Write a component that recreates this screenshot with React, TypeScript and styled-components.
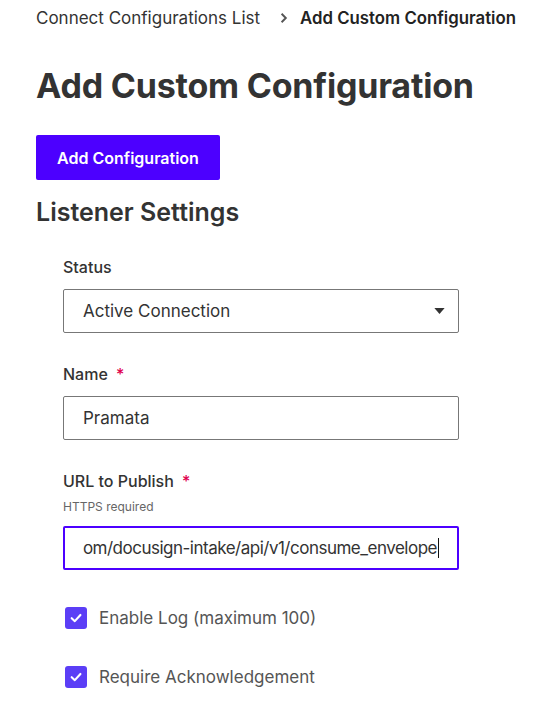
import React from "react";
import styled, { createGlobalStyle } from "styled-components";

const GlobalStyle = createGlobalStyle`
  body {
    margin: 0;
    background: #ffffff;
    font-family: "Inter", "Open Sans", sans-serif;
    color: #333333;
  }
`;

const Check = () => (
  <svg viewBox="0 0 12 12" width="14" height="14">
    <path d="M2.3 6.2 L5 8.7 L9.8 3.4" />
  </svg>
);

const App: React.FC = () => {
  return (
    <>
      <GlobalStyle />
      <Page>
        <Breadcrumb>
          <Crumb>Connect Configurations List</Crumb>
          <Chevron viewBox="0 0 10 10">
            <path d="M3 1.5 L6.5 5 L3 8.5" />
          </Chevron>
          <CurrentCrumb>Add Custom Configuration</CurrentCrumb>
        </Breadcrumb>
        <Title>Add Custom Configuration</Title>
        <PrimaryButton>Add Configuration</PrimaryButton>
        <SectionTitle>Listener Settings</SectionTitle>
        <Form>
          <Field>
            <Label>Status</Label>
            <SelectBox>
              <span>Active Connection</span>
              <Caret viewBox="0 0 12 7">
                <path d="M0 0 H12 L6 7 Z" />
              </Caret>
            </SelectBox>
          </Field>
          <Field>
            <Label>
              Name <Required>*</Required>
            </Label>
            <InputBox>Pramata</InputBox>
          </Field>
          <Field>
            <Label>
              URL to Publish <Required>*</Required>
            </Label>
            <Hint>HTTPS required</Hint>
            <InputBox focused>
              <Scroll>
                <UrlText>https://integrations.pramata.com/docusign-intake/api/v1/consume_envelope</UrlText>
                <TextCaret />
              </Scroll>
            </InputBox>
          </Field>
          <CheckRow>
            <CheckBox>
              <Check />
            </CheckBox>
            <CheckLabel>Enable Log (maximum 100)</CheckLabel>
          </CheckRow>
          <CheckRow>
            <CheckBox>
              <Check />
            </CheckBox>
            <CheckLabel>Require Acknowledgement</CheckLabel>
          </CheckRow>
        </Form>
      </Page>
    </>
  );
};

export default App;

const Page = styled.div`
  padding: 6px 0 0 36px;
  width: 518px;
  height: 695px;
  overflow: hidden;
`;
const Breadcrumb = styled.div`
  display: flex;
  align-items: center;
  font-size: 17px;
  height: 24px;
  white-space: nowrap;
`;
const Crumb = styled.span`
  color: #333333;
`;
const CurrentCrumb = styled.span`
  color: #222222;
  font-weight: 600;
  font-size: 16.8px;
`;
const Chevron = styled.svg`
  width: 12px;
  height: 12px;
  margin: 0 10px 0 18px;
  fill: none;
  stroke: #555555;
  stroke-width: 1.6;
`;
const Title = styled.h1`
  margin: 36px 0 0;
  font-size: 34px;
  font-weight: 700;
  line-height: 40px;
  color: #333333;
  letter-spacing: -0.2px;
`;
const PrimaryButton = styled.button`
  display: block;
  margin-top: 29px;
  width: 184px;
  height: 45px;
  background: #4c00ff;
  border: none;
  border-radius: 2px;
  color: #ffffff;
  font-family: inherit;
  font-size: 16px;
  font-weight: 600;
`;
const SectionTitle = styled.h2`
  margin: 16px 0 0;
  font-size: 25px;
  font-weight: 600;
  line-height: 32px;
  color: #333333;
`;
const Form = styled.div`
  padding-left: 27px;
  margin-top: 28px;
  display: flex;
  flex-direction: column;
  width: 396px;
`;
const Field = styled.div`
  display: flex;
  flex-direction: column;
  margin-bottom: 30px;
`;
const Label = styled.div`
  font-size: 16px;
  font-weight: 500;
  line-height: 22px;
  color: #333333;
  margin-bottom: 11px;
`;
const Required = styled.span`
  color: #e0004d;
  margin-left: 4px;
`;
const Hint = styled.div`
  font-size: 12px;
  color: #666666;
  margin: -4px 0 12px;
`;
const SelectBox = styled.div`
  display: flex;
  align-items: center;
  justify-content: space-between;
  height: 44px;
  box-sizing: border-box;
  border: 1px solid #777777;
  border-radius: 2px;
  padding: 0 13px 0 19px;
  font-size: 17px;
  color: #333333;
`;
const Caret = styled.svg`
  width: 11px;
  height: 6px;
  fill: #333333;
`;
const InputBox = styled.div<{ focused?: boolean }>`
  display: flex;
  align-items: center;
  height: 44px;
  box-sizing: border-box;
  border: ${({ focused }) => (focused ? "2px solid #4c00ff" : "1px solid #777777")};
  border-radius: 2px;
  padding: ${({ focused }) => (focused ? "0 18px 0 18px" : "0 18px 0 19px")};
  font-size: 17px;
  color: #333333;
  overflow: hidden;
  white-space: nowrap;
`;
const Scroll = styled.div`
  flex: 1;
  min-width: 0;
  display: flex;
  justify-content: flex-end;
  align-items: center;
  overflow: hidden;
`;
const UrlText = styled.span`
  flex-shrink: 0;
  letter-spacing: -0.5px;
`;
const TextCaret = styled.i`
  display: inline-block;
  width: 1px;
  height: 20px;
  background: #111111;
  margin-left: 1px;
  flex-shrink: 0;
`;
const CheckRow = styled.div`
  display: flex;
  align-items: center;
  gap: 12px;
  margin: 7px 0 30px 2px;
`;
const CheckBox = styled.div`
  width: 22px;
  height: 22px;
  border-radius: 3px;
  background: #5b3ef6;
  display: flex;
  align-items: center;
  justify-content: center;
  svg {
    fill: none;
    stroke: #ffffff;
    stroke-width: 1.8;
    stroke-linecap: round;
    stroke-linejoin: round;
  }
`;
const CheckLabel = styled.span`
  font-size: 17px;
  color: #555555;
`;
